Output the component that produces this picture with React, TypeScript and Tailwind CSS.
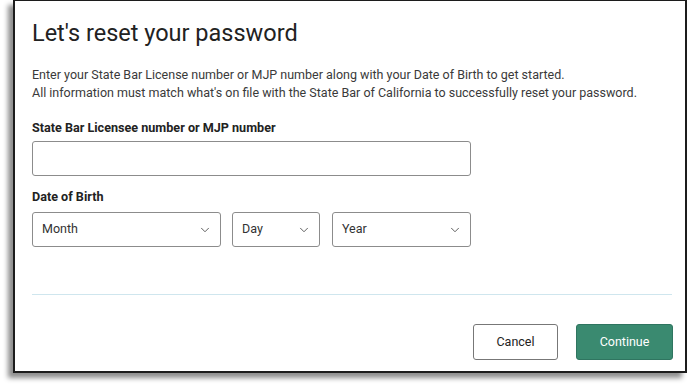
import { ChevronDown } from "lucide-react";

function Select({ label, width }: { label: string; width: string }) {
  return (
    <div
      className={`${width} flex h-[35px] items-center justify-between rounded-[3px] border border-[#8c8c8c] bg-white pl-[9px] pr-[8px] text-[12.5px] text-[#333]`}
    >
      <span>{label}</span>
      <ChevronDown className="h-[14px] w-[14px] text-[#555]" strokeWidth={1.6} />
    </div>
  );
}

export default function App() {
  return (
    <div className="h-[386px] w-[688px] bg-white font-['Roboto',sans-serif]">
      <div className="ml-[13px] flex h-[373px] w-[674px] flex-col border-2 border-t border-[#1c1c1c] bg-white pl-[17px] pr-[12px] shadow-[-5px_5px_5px_rgba(0,0,0,0.45)]">
        <h1 className="mt-[17px] text-[23.5px] leading-[30px] text-[#222]">Let's reset your password</h1>

        <p className="mt-[18px] text-[12.5px] leading-[18px] text-[#3a3a3a]">
          Enter your State Bar License number or MJP number along with your Date of Birth to get started.
          <br />
          All information must match what's on file with the State Bar of California to successfully reset your password.
        </p>

        <label className="mt-[18px] text-[12.6px] font-bold leading-[16px] text-[#222]">
          State Bar Licensee number or MJP number
        </label>
        <div className="mt-[5px] h-[35px] w-[439px] rounded-[3px] border border-[#8c8c8c]" />

        <label className="mt-[13px] text-[12.6px] font-bold leading-[16px] text-[#222]">Date of Birth</label>
        <div className="mt-[7px] flex">
          <Select label="Month" width="w-[189px]" />
          <Select label="Day" width="ml-[11px] w-[88px]" />
          <Select label="Year" width="ml-[12px] w-[139px]" />
        </div>

        <div className="mt-[47px] h-px w-[640px] bg-[#cfe6ee]" />

        <div className="mt-[29px] flex justify-end gap-[18px]">
          <button className="h-[36px] w-[85px] rounded-[3px] border border-[#777] bg-white text-[12.5px] text-[#222]">
            Cancel
          </button>
          <button className="h-[36px] w-[97px] rounded-[3px] border border-[#2f7560] bg-[#3a8a70] text-[12.5px] text-white">
            Continue
          </button>
        </div>
      </div>
    </div>
  );
}
